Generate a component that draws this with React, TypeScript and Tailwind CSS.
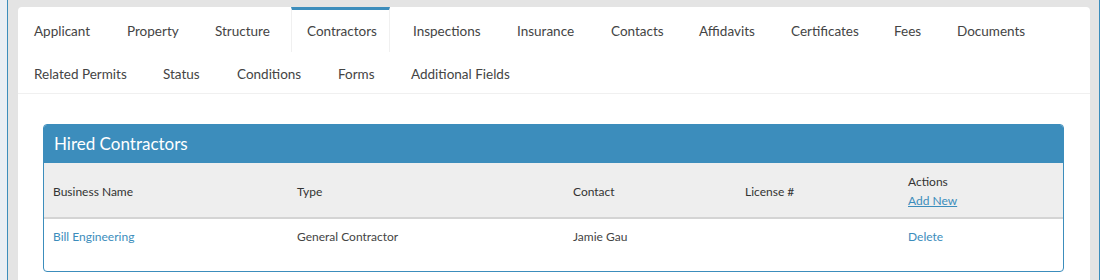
import React from "react";

const rowOne = [
  { label: "Applicant", w: "w-[85px]" },
  { label: "Property", w: "w-[80px]" },
  { label: "Structure", w: "w-[83px]" },
  { label: "Contractors", w: "w-[99px]", active: true },
  { label: "Inspections", w: "w-[96px]" },
  { label: "Insurance", w: "w-[86px]" },
  { label: "Contacts", w: "w-[80px]" },
  { label: "Affidavits", w: "w-[84px]" },
  { label: "Certificates", w: "w-[95px]" },
  { label: "Fees", w: "w-[55px]" },
  { label: "Documents", w: "w-[96px]" },
];

const rowTwo = [
  { label: "Related Permits", w: "w-[121px]" },
  { label: "Status", w: "w-[66px]" },
  { label: "Conditions", w: "w-[93px]" },
  { label: "Forms", w: "w-[65px]" },
  { label: "Additional Fields", w: "w-[128px]" },
];

type Tab = { label: string; w: string; active?: boolean };

const TabItem: React.FC<{ tab: Tab; h: string }> = ({ tab, h }) => (
  <div
    className={`${tab.w} ${h} flex items-center whitespace-nowrap border-t-[3px] pl-[15px] text-[13.5px] text-[#444] ${
      tab.active
        ? "border-x border-t-[#3c8dbc] border-x-[#f0f0f0] bg-white pl-[14px]"
        : "border-t-transparent"
    }`}
  >
    {tab.label}
  </div>
);

const App: React.FC = () => {
  return (
    <div className="flex h-[280px] w-[1100px] overflow-hidden bg-[#e4e4e4] font-['Lato','Liberation_Sans',sans-serif]">
      {/* left rail */}
      <div className="w-[7px] bg-[#e9eef4]" />
      <div className="flex flex-1 border-x border-[#3c8dbc] pl-[10px] pr-[9px] pt-[7px]">
        <div className="flex-1 rounded-t-[4px] bg-white">
          {/* Tabs */}
          <div className="border-b border-[#f0f0f0] pl-[1px]">
            <div className="flex gap-[8px]">
              {rowOne.map((t) => (
                <TabItem key={t.label} tab={t} h="h-[45px]" />
              ))}
            </div>
            <div className="flex gap-[8px]">
              {rowTwo.map((t) => (
                <TabItem key={t.label} tab={t} h="h-[41px]" />
              ))}
            </div>
          </div>

          {/* Content */}
          <div className="pl-[25px] pr-[26px] pt-[30px]">
            <div className="overflow-hidden rounded-[4px] border border-[#3c8dbc]">
              <div className="flex h-[38px] items-center bg-[#3c8dbc] pl-[10px] text-[17px] text-white">
                Hired Contractors
              </div>
              <table className="w-full border-collapse text-[12px]">
                <thead>
                  <tr className="h-[55px] border-b-2 border-[#d4d4d4] bg-[#eeeeee] text-left text-[#333]">
                    <th className="w-[245px] pl-[9px] pt-[3px] font-normal">Business Name</th>
                    <th className="w-[276px] pl-[8px] pt-[3px] font-normal">Type</th>
                    <th className="w-[172px] pl-[8px] pt-[3px] font-normal">Contact</th>
                    <th className="w-[163px] pl-[8px] pt-[3px] font-normal">License #</th>
                    <th className="pl-[8px] pt-[1px] font-normal leading-[19px]">
                      <div>Actions</div>
                      <a href="#" className="text-[#3c8dbc] underline">
                        Add New
                      </a>
                    </th>
                  </tr>
                </thead>
                <tbody>
                  <tr className="h-[53px] align-top text-[#444]">
                    <td className="pl-[9px] pt-[9px]">
                      <a href="#" className="text-[#3c8dbc]">
                        Bill Engineering
                      </a>
                    </td>
                    <td className="pl-[8px] pt-[9px]">General Contractor</td>
                    <td className="pl-[8px] pt-[9px]">Jamie Gau</td>
                    <td className="pl-[8px] pt-[9px]"></td>
                    <td className="pl-[8px] pt-[9px]">
                      <a href="#" className="text-[#3c8dbc]">
                        Delete
                      </a>
                    </td>
                  </tr>
                </tbody>
              </table>
            </div>
          </div>
        </div>
      </div>
    </div>
  );
};

export default App;
